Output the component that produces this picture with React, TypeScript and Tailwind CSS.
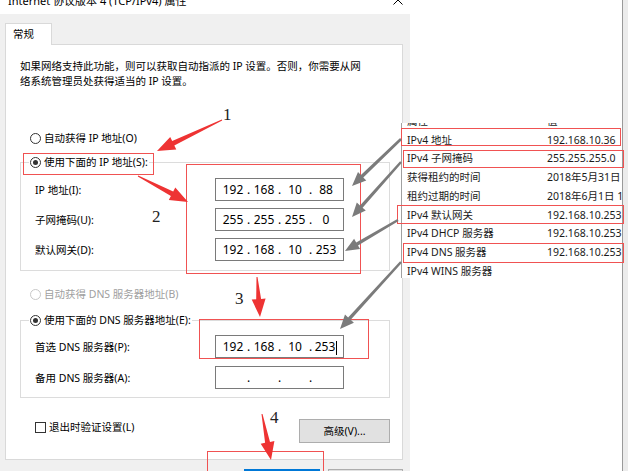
import React from 'react';

type Pt = [number, number];

// polygon for a tapered arrow: thin tail, shaft, triangular head
const arrowPoints = (tail: Pt, tip: Pt, tailW: number, shaftW: number, headLen: number, headW: number) => {
  const dx = tip[0] - tail[0];
  const dy = tip[1] - tail[1];
  const len = Math.hypot(dx, dy);
  const ux = dx / len;
  const uy = dy / len;
  const nx = -uy;
  const ny = ux;
  const bx = tip[0] - ux * headLen;
  const by = tip[1] - uy * headLen;
  const p = (x: number, y: number, w: number, s: number) =>
    `${(x + (nx * w * s) / 2).toFixed(1)},${(y + (ny * w * s) / 2).toFixed(1)}`;
  return [
    p(tail[0], tail[1], tailW, 1),
    p(bx, by, shaftW, 1),
    p(bx, by, headW, 1),
    `${tip[0]},${tip[1]}`,
    p(bx, by, headW, -1),
    p(bx, by, shaftW, -1),
    p(tail[0], tail[1], tailW, -1),
  ].join(' ');
};

const Radio = ({ checked = false, disabled = false, children }: { checked?: boolean; disabled?: boolean; children: React.ReactNode }) => (
  <span className={`flex items-center gap-[3px] h-[16px] leading-[16px] ${disabled ? 'text-[#a0a0a0]' : 'text-black'}`}>
    <span
      className={`w-[11px] h-[11px] rounded-full border bg-white flex items-center justify-center ${
        disabled ? 'border-[#c8c8c8]' : 'border-[#333333]'
      }`}
    >
      {checked && <span className="w-[5px] h-[5px] rounded-full bg-[#333333]" />}
    </span>
    <span>{children}</span>
  </span>
);

const IpBox = ({ parts, cursor = false }: { parts: string[]; cursor?: boolean }) => (
  <div className="w-[129px] h-[23px] border border-[#7a7a7a] bg-white flex pl-[3px] text-[12px] leading-[21px] text-black">
    {parts.map((p, i) => (
      <React.Fragment key={i}>
        {i > 0 && <span className="w-[3px] text-center">.</span>}
        <span className="w-[28px] text-center">
          {p}
          {cursor && i === 3 && <span className="inline-block w-px h-[14px] bg-black align-middle ml-px" />}
        </span>
      </React.Fragment>
    ))}
  </div>
);

const FieldRow = ({ label, children }: { label: string; children: React.ReactNode }) => (
  <div className="flex items-center h-[23px]">
    <span className="w-[194px] pl-[14px] leading-[16px]">{label}</span>
    {children}
  </div>
);

const infoRows: [string, string][] = [
  ['属性', '值'],
  ['IPv4 地址', '192.168.10.36'],
  ['IPv4 子网掩码', '255.255.255.0'],
  ['获得租约的时间', '2018年5月31日 10:39:15'],
  ['租约过期的时间', '2018年6月1日 10:39:15'],
  ['IPv4 默认网关', '192.168.10.253'],
  ['IPv4 DHCP 服务器', '192.168.10.253'],
  ['IPv4 DNS 服务器', '192.168.10.253'],
  ['IPv4 WINS 服务器', ''],
];

const redBoxes = [
  [23.5, 153.5, 130, 21],
  [186.5, 164.5, 174, 109],
  [199.5, 319.5, 169, 39],
  [207.5, 451.5, 116, 30],
  [401.5, 128.5, 219, 17],
  [403.5, 150.5, 220, 17],
  [397.5, 205.5, 226, 18],
  [403.5, 243.5, 220, 19],
];

const redArrows: [Pt, Pt][] = [
  [[222, 120], [157, 151]],
  [[138, 176], [188, 202]],
  [[257, 277], [260, 317]],
  [[262, 414], [271, 460]],
];

const grayArrows: [Pt, Pt][] = [
  [[401, 139], [352, 186]],
  [[401, 162], [352, 217]],
  [[398, 220], [345, 251]],
  [[401, 262], [340, 329]],
];

const numbers = [
  { n: '1', cls: 'left-[223px] top-[106px]' },
  { n: '2', cls: 'left-[152px] top-[208px]' },
  { n: '3', cls: 'left-[235px] top-[290px]' },
  { n: '4', cls: 'left-[270px] top-[409px]' },
];

export default function App() {
  return (
    <div className="relative w-[628px] h-[471px] overflow-hidden bg-white flex items-start font-['Noto_Sans','Noto_Sans_CJK_SC',sans-serif] text-[10.5px] text-black">
      {/* dialog */}
      <div className="w-[410px] flex flex-col shrink-0">
        <div className="shrink-0 h-[14px] overflow-hidden bg-white flex items-start justify-between pl-[8px] pr-[7px]">
          <div className="-mt-[6px] text-[11px] leading-[14px] whitespace-nowrap">Internet 协议版本 4 (TCP/IPv4) 属性</div>
          <svg width="10" height="10" viewBox="0 0 10 10" className="-mt-[5px]">
            <path d="M0.5 0.5 L9.5 9.5 M9.5 0.5 L0.5 9.5" stroke="#000" strokeWidth="1" />
          </svg>
        </div>
        <div className="shrink-0 bg-[#f0f0f0] pt-[9px] pl-[5px] pr-[7px] pb-[10px]">
          <div className="relative z-10 -mb-px w-[47px] h-[22px] bg-white border border-b-0 border-[#d9d9d9] pl-[7px] leading-[20px]">常规</div>
          <div className="h-[416px] bg-white border border-[#d9d9d9] pt-[14px] pl-[14px] pr-[12px]">
            <div className="leading-[15px]">
              <div>如果网络支持此功能，则可以获取自动指派的 IP 设置。否则，你需要从网</div>
              <div>络系统管理员处获得适当的 IP 设置。</div>
            </div>

            <div className="mt-[41px] pl-[10px]">
              <Radio>自动获得 IP 地址(O)</Radio>
            </div>
            <fieldset className="mt-[8px] border border-[#dcdcdc]">
              <legend className="ml-[8px] px-[1px]">
                <Radio checked>使用下面的 IP 地址(S):</Radio>
              </legend>
              <div className="pt-[8px] pb-[9px] flex flex-col gap-[7px]">
                <FieldRow label="IP 地址(I):">
                  <IpBox parts={['192', '168', '10', '88']} />
                </FieldRow>
                <FieldRow label="子网掩码(U):">
                  <IpBox parts={['255', '255', '255', '0']} />
                </FieldRow>
                <FieldRow label="默认网关(D):">
                  <IpBox parts={['192', '168', '10', '253']} />
                </FieldRow>
              </div>
            </fieldset>

            <div className="mt-[15px] pl-[10px]">
              <Radio disabled>自动获得 DNS 服务器地址(B)</Radio>
            </div>
            <fieldset className="mt-[10px] border border-[#dcdcdc]">
              <legend className="ml-[8px] px-[1px]">
                <Radio checked>使用下面的 DNS 服务器地址(E):</Radio>
              </legend>
              <div className="pt-[7px] pb-[8px] flex flex-col gap-[8px]">
                <FieldRow label="首选 DNS 服务器(P):">
                  <IpBox parts={['192', '168', '10', '253']} cursor />
                </FieldRow>
                <FieldRow label="备用 DNS 服务器(A):">
                  <IpBox parts={['', '', '', '']} />
                </FieldRow>
              </div>
            </fieldset>

            <div className="mt-[21px] flex justify-between items-start">
              <div className="pl-[15px] flex items-center gap-[3px] h-[16px] leading-[16px]">
                <span className="w-[11px] h-[11px] border border-[#333333] bg-white" />
                <span>退出时验证设置(L)</span>
              </div>
              <div className="w-[91px] h-[24px] border border-[#adadad] bg-[#e1e1e1] flex items-center justify-center leading-[16px]">
                高级(V)...
              </div>
            </div>
          </div>
          <div className="mt-[9px] ml-[239px] flex gap-[8px]">
            <div className="w-[77px] h-[23px] border-2 border-[#0078d7] bg-[#e5f1fb] flex items-center justify-center">确定</div>
            <div className="w-[76px] h-[23px] border border-[#adadad] bg-[#e1e1e1] flex items-center justify-center">取消</div>
          </div>
        </div>
      </div>

      {/* window behind, on the right */}
      <div className="flex-1 self-stretch bg-white border-r border-[#9a9a9a]" />
      <div className="w-[5px] self-stretch bg-[#ececec]" />

      {/* pasted network details panel */}
      <div className="absolute left-[401px] top-[123px] w-[221px] h-[155px] overflow-hidden bg-white border-l border-[#a0a0a0]">
        <div className="-mt-[11px] pl-[5px] leading-[18.7px] text-[#1a1a1a]">
          {infoRows.map(([k, v]) => (
            <div key={k} className="flex whitespace-nowrap">
              <span className="w-[140px] shrink-0">{k}</span>
              <span>{v}</span>
            </div>
          ))}
        </div>
      </div>

      {/* annotations */}
      {numbers.map((x) => (
        <div key={x.n} className={`absolute ${x.cls} font-['Liberation_Serif',serif] text-[17px] leading-none text-[#222222]`}>
          {x.n}
        </div>
      ))}
      <svg className="absolute left-0 top-0 pointer-events-none" width="628" height="471" viewBox="0 0 628 471">
        {redBoxes.map(([x, y, w, h], i) => (
          <rect key={i} x={x} y={y} width={w} height={h} fill="none" stroke="#f05252" strokeWidth="1" />
        ))}
        {grayArrows.map(([a, b], i) => (
          <polygon key={i} points={arrowPoints(a, b, 2.5, 3.5, 14, 12)} fill="#7b7b7b" />
        ))}
        {redArrows.map(([a, b], i) => (
          <polygon key={i} points={arrowPoints(a, b, 1, 5, 18, 14)} fill="#ee3333" />
        ))}
      </svg>
    </div>
  );
}
